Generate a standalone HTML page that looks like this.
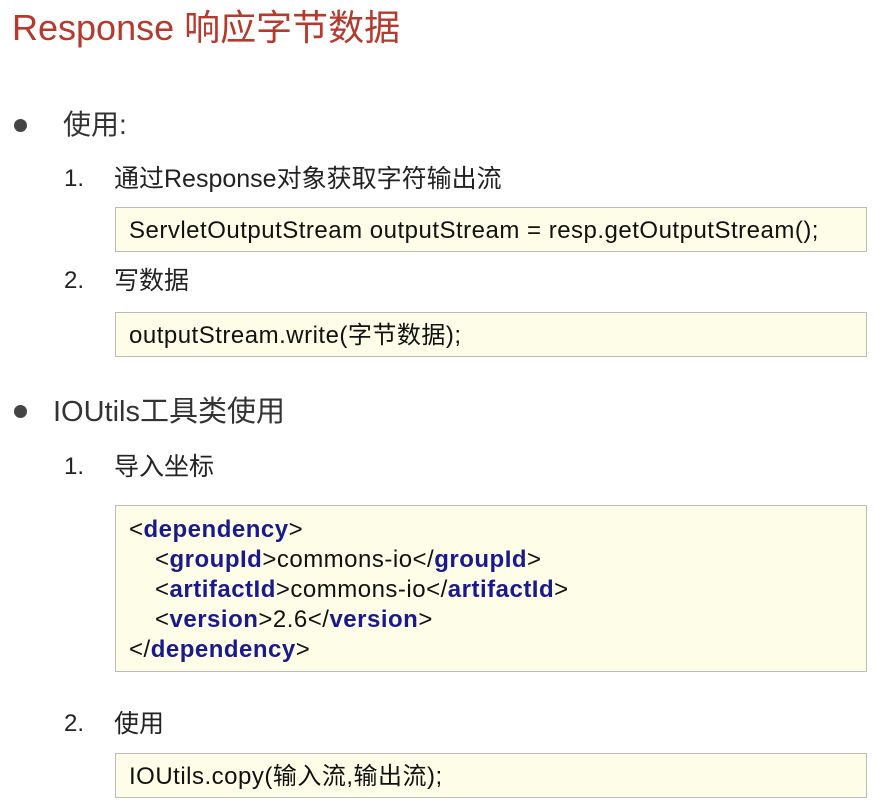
<!DOCTYPE html>
<html><head><meta charset="utf-8"><style>
body{margin:0;width:874px;height:800px;background:#fff;position:relative;overflow:hidden;font-family:"Liberation Sans","Noto Sans CJK SC",sans-serif;color:#333}
.a{position:absolute;white-space:nowrap}
.t{left:12px;top:6px;font-size:36px;color:#b5392c;line-height:44px}
.dot{position:absolute;width:13px;height:13px;border-radius:50%;background:#444}
.b{font-size:28px;line-height:36px}
.n{font-size:24px;line-height:30px;color:#222}
.box{position:absolute;left:115px;width:752px;background:#fefde8;border:1px solid #bbb;font-size:24px;letter-spacing:0.5px;color:#111;line-height:30px;padding-left:13px;box-sizing:border-box}
.k{color:#1a1a8c;font-weight:bold}
.ind{padding-left:26px}
</style></head><body>
<div class="a t">Response 响应字节数据</div>
<div class="dot" style="left:14px;top:119px"></div>
<div class="a b" style="left:63px;top:107px">使用:</div>
<div class="a n" style="left:64px;top:164px">1.</div>
<div class="a n" style="left:114px;top:164px;font-size:25px">通过Response对象获取字符输出流</div>
<div class="box" style="top:207px;height:45px;padding-top:8px">ServletOutputStream outputStream = resp.getOutputStream();</div>
<div class="a n" style="left:64px;top:266px">2.</div>
<div class="a n" style="left:114px;top:266px;font-size:25px">写数据</div>
<div class="box" style="top:312px;height:45px;padding-top:8px">outputStream.write(字节数据);</div>
<div class="dot" style="left:14px;top:405px"></div>
<div class="a b" style="left:53px;top:394px;font-size:29px">IOUtils工具类使用</div>
<div class="a n" style="left:64px;top:452px">1.</div>
<div class="a n" style="left:114px;top:452px;font-size:25px">导入坐标</div>
<div class="box" style="top:505px;height:167px;padding-top:9px">&lt;<span class="k">dependency</span>&gt;<br><span class="ind">&lt;<span class="k">groupId</span>&gt;commons-io&lt;/<span class="k">groupId</span>&gt;</span><br><span class="ind">&lt;<span class="k">artifactId</span>&gt;commons-io&lt;/<span class="k">artifactId</span>&gt;</span><br><span class="ind">&lt;<span class="k">version</span>&gt;2.6&lt;/<span class="k">version</span>&gt;</span><br>&lt;/<span class="k">dependency</span>&gt;</div>
<div class="a n" style="left:64px;top:709px">2.</div>
<div class="a n" style="left:114px;top:709px;font-size:25px">使用</div>
<div class="box" style="top:753px;height:45px;padding-top:8px">IOUtils.copy(输入流,输出流);</div>
</body></html>
